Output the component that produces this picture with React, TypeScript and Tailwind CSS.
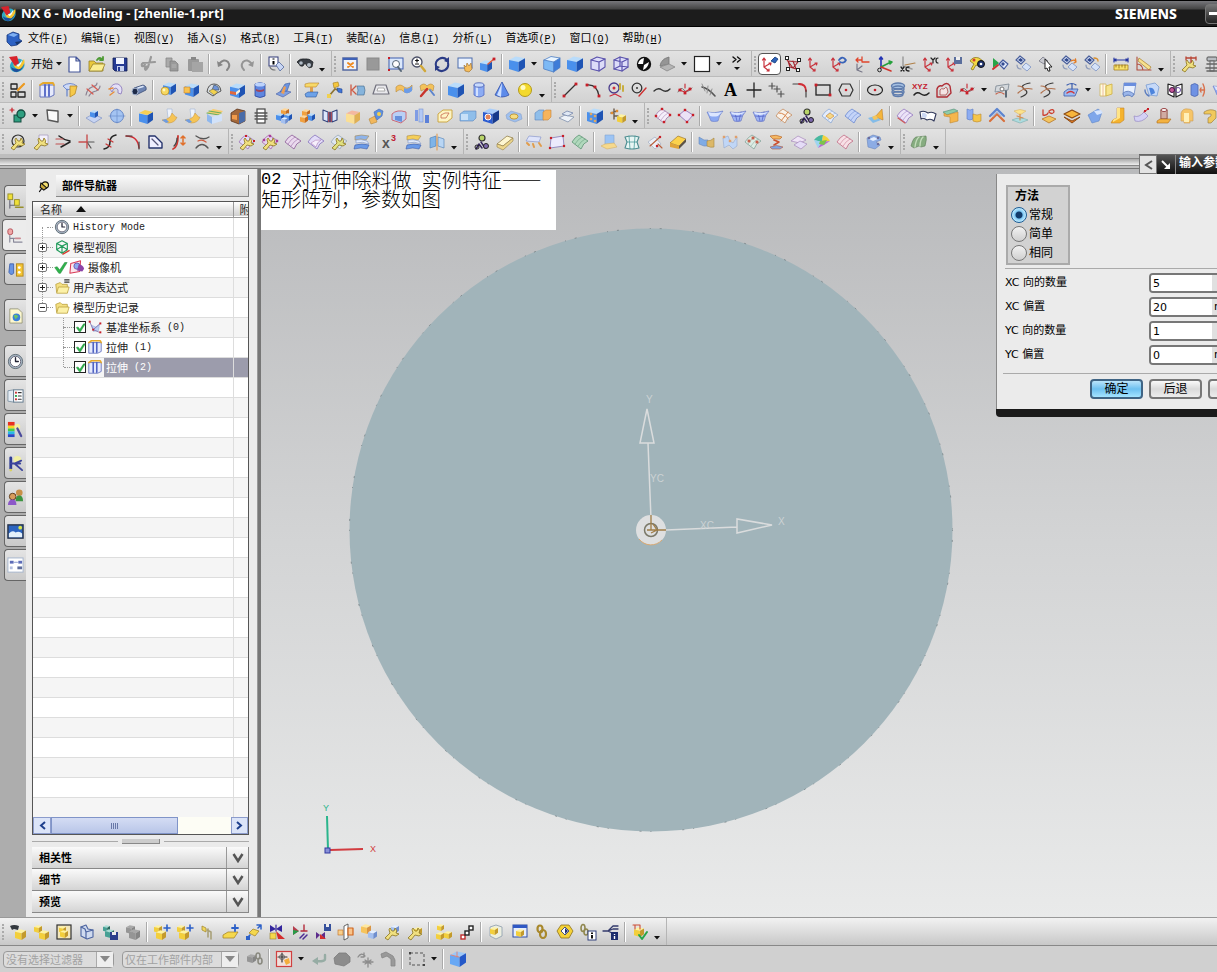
import { useState, type ReactNode } from 'react';

type ShapeProps = { d: string; c?: string; w?: number; f?: string };

// Stroke-only path
function L({ d, c = '#333', w = 1.2 }: ShapeProps) {
  return <path d={d} fill="none" stroke={c} strokeWidth={w} strokeLinecap="round" strokeLinejoin="round" />;
}

// Filled path with a thin outline
function F({ d, f = '#fff', c = 'none', w = 0.8 }: ShapeProps) {
  return <path d={d} fill={f} stroke={c} strokeWidth={w} strokeLinejoin="round" />;
}

const BLUE = ['#b9dcfb', '#4a90ec', '#1f54b4'];
const PALE = ['#e4efff', '#a4c0f0', '#6f8fd0'];
const GOLD = ['#fff3a0', '#f3cf3c', '#c39a2c'];
const ORANGE = ['#ffd79a', '#f2a03e', '#c46c20'];
const GREY = ['#a8a8a8', '#959595', '#858585'];

function Cube({ x = 1, y = 1, s = 16, t = BLUE }: { x?: number; y?: number; s?: number; t?: string[] }) {
  const p = (a: number, b: number) => `${x + a * s},${y + b * s}`;
  return (
    <>
      <polygon points={[p(0, 0.25), p(0.42, 0.03), p(1, 0.14), p(0.6, 0.38)].join(' ')} fill={t[0]} />
      <polygon points={[p(0, 0.25), p(0.6, 0.38), p(0.6, 1), p(0, 0.82)].join(' ')} fill={t[1]} />
      <polygon points={[p(0.6, 0.38), p(1, 0.14), p(1, 0.72), p(0.6, 1)].join(' ')} fill={t[2]} />
    </>
  );
}

function Sheet({ f = '#c9cdf3', c = '#6f64b8', g = true }: { f?: string; c?: string; g?: boolean }) {
  return (
    <>
      <F d="M1 9 Q4 4 8 2 L17 8 Q12 10 10 16 Z" f={f} c={c} />
      {g && <L d="M4 11 Q7 6 11 4 M7 13 Q10 8 14 6" c={c} w={0.5} />}
    </>
  );
}

function Dots({ pts, c = '#c81e28', r = 1.4 }: { pts: number[][]; c?: string; r?: number }) {
  return <>{pts.map(([x, y]) => <rect key={`${x}-${y}`} x={x - r} y={y - r} width={r * 2} height={r * 2} fill={c} />)}</>;
}

function Wrench({ c = '#f0e080' }: { c?: string }) {
  return <F d="M2 15 L7 10 Q5 6 7 5 L9 8 L11 8 L12 5 Q15 8 13 10 L16 11 L13 13 L9 12 L5 17 Z" f={c} c="#8a7420" />;
}

function Axes({ c = '#c8323c' }: { c?: string }) {
  return <L d="M3 3 V12 L8 16 M3 12 L10 8 M1.500 5 L3 3 L4.500 5 M8 8 L10 8 L9.500 10 M6 16 H8 V14" c={c} w={1.2} />;
}

function Ribbon({ a = '#f5cf5a', b = '#6a9ae8' }: { a?: string; b?: string }) {
  return (
    <>
      <F d="M2 3 Q8 1 16 3 L13 7 Q8 5 2 7 Z" f={a} c="#a88a50" w={0.6} />
      <F d="M3 7 Q8 6 14 8 L16 11 Q9 8 3 10 Z" f="#e4edfc" c="#7c94c8" w={0.6} />
      <F d="M2 12 Q9 10 16 12 L14 16 Q8 14 1 16 Z" f={b} c="#3a5aa8" w={0.6} />
    </>
  );
}

function Layers() {
  return (
    <>
      <F d="M2 5 L6 1 L11 5 L7 9 Z" f="#dfe8fb" c="#4a5f9a" w={1.2} />
      <F d="M4 5 L6.500 3 L9 5 L7 7 Z" f="#30488c" />
      <F d="M8 12 L12 8 L17 12 L13 16 Z" f="#d5e2f8" c="#7c93c4" />
      <L d="M3 10 Q3 14 7 14" c="#8b98b8" />
    </>
  );
}

const nxLogo = (
  <>
    <ellipse cx="9" cy="10.500" rx="7.500" ry="6.500" fill="#2fa8c4" transform="rotate(-30 9 10)" />
    <F d="M3 12 Q9 17 16 8 Q15 15 9 17 Q4 17 3 12 Z" f="#1f4f9c" />
    <F d="M5 9 Q10 14 16 4 Q18 9 12 14 Q7 15 5 9 Z" f="#f7c62e" />
    <F d="M7 8 Q10 12 14 5 Q14 9 10 12 Z" f="#fff" />
    <F d="M1 2 L9 1 L11 8 L7 11 Z" f="#d7232c" />
  </>
);

const icons: Record<string, ReactNode> = {
  nx: nxLogo,
  part: (
    <>
      <F d="M2 5 L8 2 L14 4 L14 9 L17 11 L12 15 L6 16 L2 12 Z" f="#2d62c4" c="#16377c" />
      <F d="M3 5 L8 3 L13 4.500 L9 7 Z" f="#7fb0f2" />
      <F d="M10 12 L17 11 L12 15 Z" f="#17376f" />
    </>
  ),
  new: <F d="M4 2 H11 L15 6 V17 H4 Z M11 2 V6 H15" f="#fff" c="#44569a" w={1.2} />,
  open: (
    <>
      <F d="M1 6 H6 L8 8 H15 V16 H1 Z" f="#e9c93c" c="#96802a" />
      <F d="M1 16 L5 9 H17 L14 16 Z" f="#fbee92" c="#96802a" />
      <L d="M9 5 Q12 1 14 5 M12 5 H15 V2" c="#4d9a34" w={1.8} />
    </>
  ),
  save: (
    <>
      <F d="M2 3 H16 V16 H4 L2 14 Z" f="#263b94" c="#101c50" />
      <rect x="5" y="3" width="8" height="6" fill="#f2f5ff" />
      <rect x="6" y="11" width="7" height="5" fill="#c8d2ef" />
      <rect x="7" y="12" width="2" height="4" fill="#263b94" />
    </>
  ),
  cut: <L d="M11 2 L8 12 M3 8 L15 7 M8 12 Q5 17 5 13 Q6 11 8 12 M4 8 Q1 8 2 11 Q5 12 5 8" c="#999" w={2.2} />,
  copy: <><F d="M3 3 H9 V12 H3 Z" f="#aaa" c="#888" /><F d="M7 6 H12 L15 9 V16 H7 Z" f="#999" c="#828282" /><L d="M9 10 H13 M9 12 H13" c="#bbb" w={0.8} /></>,
  paste: <><rect x="2" y="4" width="11" height="12" rx="1" fill="#999" /><rect x="5" y="2" width="5" height="3" fill="#888" /><rect x="6" y="7" width="11" height="10" fill="#a5a5a5" /></>,
  undo: <><L d="M4 9 Q9 3 13 7 Q16 11 12 15" c="#858585" w={2} /><F d="M2 6 L3 12 L8 10 Z" f="#858585" /></>,
  redo: <><L d="M14 9 Q9 3 5 7 Q2 11 6 15" c="#959595" w={2} /><F d="M16 6 L15 12 L10 10 Z" f="#959595" /></>,
  info: (
    <>
      <rect x="2" y="2" width="9" height="9" fill="#fff" stroke="#303a78" />
      <path d="M6.500 3.500 V4.500 M6.500 6 V9.500" stroke="#000" strokeWidth="2" />
      <F d="M9 10 L12 7 L17 12 L13 16 Z" f="#c9d6f4" c="#53689c" />
      <L d="M3 12 Q4 15 8 15" c="#777" />
    </>
  ),
  find: (
    <>
      <F d="M1 7 Q4 3 9 4 Q13 3 17 7 L16 12 Q13 14 11 11 L9 8 L7 11 Q4 12 3 9 Z" f="#3a3f46" c="#1f2226" />
      <circle cx="5" cy="8" r="1.800" fill="#b4bec9" />
      <circle cx="13" cy="10" r="2" fill="#b4bec9" />
    </>
  ),
  fit: <><rect x="2" y="3" width="14" height="12" fill="#eef2fb" stroke="#5468a0" strokeWidth="1.500" /><rect x="2" y="3" width="14" height="2" fill="#3f62b8" /><L d="M7 8 L12 12 M12 8 L7 12" c="#ef8a20" w={2} /></>,
  blank: <rect x="3" y="3" width="12" height="12" fill="#999" stroke="#8a8a8a" />,
  zoombox: <><rect x="2" y="3" width="14" height="11" fill="#dbe8fb" stroke="#3d5cae" /><circle cx="9" cy="9" r="3.500" fill="#fff" stroke="#567" /><L d="M11 12 L14 16" c="#567" w={2} /><Dots pts={[[2, 15], [2, 3]]} r={1} /></>,
  zoom: <><circle cx="7" cy="7" r="5" fill="#fff" stroke="#4a4f66" strokeWidth="1.300" /><L d="M7 4 V7 M5.500 5.500 H8.500 M5.500 9 H8.500" c="#111" /><L d="M11 11 L15 16" c="#d1a838" w={2.5} /></>,
  rotate: <><L d="M3 11 A6.500 6.500 0 0 1 14 5" c="#2a3b86" w={2} /><L d="M15 8 A6.500 6.500 0 0 1 4 14" c="#2a3b86" w={2} /><F d="M16 2 V8 L11 6 Z" f="#2a3b86" /><F d="M2 16 V10 L7 12 Z" f="#2a3b86" /></>,
  pan: <><rect x="2" y="3" width="14" height="10" fill="#eaf2ff" stroke="#4c6dab" /><F d="M9 16 L8 10 L10 12 L11 8 L13 11 L15 8 L16 14 L13 17 Z" f="#f5bd5c" c="#9a6a28" w={0.6} /></>,
  persp: <><Cube x={1} y={5} s={12} /><L d="M9 9 L15 4" c="#e05a3a" w={1.5} /><Dots pts={[[15, 4]]} /></>,
  cube: <Cube />,
  cubeEdge: <><Cube t={['#e9f5ff', '#7db9f5', '#3d7cd8']} /><L d="M1 5 L8 1.500 L17 3 L17 12.500 L10.600 17 L1 14 Z M1 5 L10.600 7 L17 3 M10.600 7 V17" c="#4a7cc4" w={0.8} /></>,
  wire: <><F d="M2 5 L8 2 L16 4 V12 L10 16 L2 14 Z" f="#dcdcf8" c="#5a52ac" w={1.1} /><L d="M2 5 L10 7 L16 4 M10 7 V16" c="#5a52ac" /></>,
  wire2: <><F d="M2 5 L8 2 L16 4 V12 L10 16 L2 14 Z" f="#dcdcf8" c="#5a52ac" w={1.1} /><L d="M2 5 L10 7 L16 4 M10 7 V16 M8 2 V11 L2 14 M8 11 L16 12" c="#5a52ac" /></>,
  half: <><circle cx="9" cy="9" r="7.200" fill="#111" /><F d="M9 3 Q4 4 3 9 L8 9 Z" f="#fff" /><F d="M14 7 Q13 13 8 15 L9 10 Z" f="#fff" /></>,
  face: <><F d="M2 11 Q3 4 11 2 L11 9 Z" f="#959595" c="#777" /><F d="M2 12 L11 9 L17 12 L9 16 Z" f="#b5b5b5" c="#888" /></>,
  white: <rect x="1.500" y="1.500" width="15" height="15" fill="#fff" stroke="#222" strokeWidth="1.200" />,
  more: <><L d="M5 2 L8 4.500 L5 7 M9.500 2 L12.500 4.500 L9.500 7" c="#111" w={1.4} /><F d="M6 12 H12 L9 15 Z" f="#111" /></>,
  wcs: <><Axes /><F d="M10 6 L14 2 L17 4 L14 8 Z" f="#2d62b8" c="#123a78" /></>,
  wcsDyn: <><L d="M3 5 L9 13 L14 7 L4 6 L6 12 L12 14 L9 6" c="#a3242c" w={1.1} /><g fill="#fff" stroke="#222"><rect x="1.500" y="1.500" width="3" height="3" /><rect x="13.500" y="3.500" width="3" height="3" /><rect x="2.500" y="12.500" width="3" height="3" /><rect x="12.500" y="13.500" width="3" height="3" /></g></>,
  axes: <Axes />,
  axRot: <><Axes /><L d="M9 5 Q12 1 15 4 M16 5 Q14 9 10 7" c="#3963b8" w={1.8} /></>,
  axOri: <><L d="M9 2 V7 H16 M3 5 H9 M5 3 L3 5 L5 7" c="#e0452c" w={1.3} /><L d="M4 9 V15 L9 17 M4 15 L9 11" c="#778" /></>,
  axRgb: <><L d="M5 2 V13 M3.500 4 L5 2 L6.500 4" c="#2434b4" w={1.6} /><L d="M5 12 L15 7 M13 6 L16 7 L14 9" c="#26a03c" w={1.6} /><L d="M5 12 L15 16" c="#d0342c" w={1.6} /><circle cx="3.500" cy="15" r="1.800" fill="none" stroke="#222" /></>,
  axXc: <><L d="M4 2 V11 L13 14" c="#999" w={1.4} /><L d="M2 12 L5 16 M5 12 L2 16 M10 12 Q7 12 7 14 Q7 16 10 16" c="#222" w={1.3} /><L d="M6 10 L16 8" c="#b08048" /></>,
  axYc: <><Axes /><L d="M9 3 L11 5 L13 3 M11 5 V8 M16 3 Q14 3 14 5.500 Q14 8 16 8" c="#222" w={1.2} /></>,
  axSave: <><Axes /><rect x="9" y="2" width="8" height="7" fill="#5a6e9c" /><rect x="11" y="2" width="4" height="3" fill="#eee" /></>,
  key: <><F d="M2 6 Q5 1 11 3 L15 6 L13 12 L8 10 L5 15 L3 14 L6 9 Z" f="#f2d845" c="#8f7a1c" /><circle cx="13" cy="9" r="3.500" fill="#20336f" stroke="#111" /><circle cx="13" cy="9" r="1.300" fill="#fff" /><circle cx="6" cy="5" r="1.500" fill="#d03c30" /></>,
  layMove: <><F d="M2 3 L8 8 L2 13 Z" f="#27a548" /><L d="M2 14 L7 10" c="#d03030" w={2} /><F d="M8 9 L12 5 L17 9 L13 14 Z" f="#e0e9fb" c="#43599c" w={1.2} /><F d="M10 9 L12 7 L14 9 L12 11 Z" f="#334a90" /></>,
  layers: <Layers />,
  layCur: <><F d="M2 6 L6 2 L11 6 L7 9 Z" f="#c9cad0" c="#787a88" /><F d="M8 4 L15 12 L12 12 L13 16 L11 16 L10 13 L8 14 Z" f="#fff" c="#222" w={1} /></>,
  layIn: <><Layers /><L d="M11 6 Q15 4 16 7 M14 8 L16 7 L15.500 4" c="#e27a24" w={1.3} /></>,
  layOut: <><Layers /><L d="M11 3 Q15 3 15 6" c="#d89030" w={1.3} /></>,
  measure: <><L d="M2 3 V7 M16 3 V7 M2 5 H16 M4 4 L2 5 L4 6 M14 4 L16 5 L14 6" c="#2434a0" /><F d="M2 10 H16 V15 H2 Z" f="#f8e26c" c="#a88020" /><L d="M4 10 V12 M7 10 V13 M10 10 V12 M13 10 V13" c="#8a6818" w={0.8} /></>,
  angle: <><F d="M4 3 L16 12 L14 15 L3 6 Z" f="#f8e08c" c="#b08a3c" /><L d="M2 2 V15 H16 M2 9 Q7 9 8 15" c="#b04c3c" w={1.1} /></>,
  wrenchPart: <><Wrench /><L d="M6 3 H16 M11 2 V7 M6 2 V5 M16 2 V5" c="#b84434" w={1.3} /></>,
  bolt: <><rect x="4" y="2" width="10" height="4" rx="1" fill="#b9bdc2" stroke="#555" /><rect x="7" y="6" width="4" height="10" fill="#d7dade" stroke="#666" /><L d="M4 9 H14 M3 13 H15 M4 16 H14" c="#666" w={1.6} /></>,

  sketch: <><L d="M2 3 H8 V8 H2 Z M2 11 H7 V16 H2 Z M9 11 H16 V16 H9 Z" c="#222" w={1.3} /><L d="M9 9 L15 3" c="#ec9a20" w={2.2} /></>,
  extrude: <><F d="M2 4 H16 V14 L12 16 H2 Z" f="#e6eafc" c="#4858b0" /><L d="M7 4 V15 M11 4 V15" c="#5064c4" w={1.8} /><L d="M2 4 L5 2 H15 L16 4" c="#e6a92c" w={1.8} /></>,
  revolve: <><F d="M2 5 Q9 0 16 5 L13 9 Q9 7 6 9 Z" f="#cddaf8" c="#5a78c8" /><F d="M9 5 L16 5 L14 13 L9 16 Z" f="#f6c94a" c="#b88a28" /><L d="M6 8 V15" c="#6280cc" /></>,
  sweep: <><L d="M2 14 Q3 8 8 6 Q13 5 13 2 M5 15 Q7 11 12 10 Q16 8 16 5" c="#8b8292" /><L d="M3 8 L9 13 M8 4 L14 9" c="#dc5a50" w={1.2} /></>,
  sweep2: <><F d="M3 8 Q5 2 11 3 Q17 6 14 13 L11 12 Q12 8 9 7 Q6 7 5 11 Z" f="#e4e0f8" c="#8774b8" /><L d="M3 14 L7 11 M2 8 L6 7" c="#e68e3c" w={1.4} /></>,
  tube: <><F d="M4 7 L13 4 Q17 5 16 9 L6 14 Z" f="#6d84b2" c="#3b4c76" /><ellipse cx="5" cy="10.500" rx="3" ry="3.400" fill="#1d2a48" stroke="#a9b7d2" /><L d="M8 7 L13 5.500" c="#dbe6f8" w={1.6} /></>,
  hole: <><Cube x={4} y={1} s={13} /><circle cx="6" cy="10" r="4" fill="#f6d860" stroke="#a87c1c" strokeWidth="0.600" /><circle cx="5" cy="9" r="1.400" fill="#fff6c0" /></>,
  boss: <><Cube x={3} y={2} s={14} /><F d="M2 6 H8 V12 H2 Z" f="#f8c250" c="#c5822c" w={0.6} /></>,
  dart: <><F d="M2 11 Q3 3 9 3 Q15 3 16 10 L12 12 L8 15 Z" f="#d8dde2" c="#333" /><F d="M7 9 L9 4 Q14 5 14 9 Z" f="#6f94d8" c="#345" w={0.6} /><F d="M4 10 L8 8 L13 11 L9 14 Z" f="#f3d24c" c="#665" w={0.6} /></>,
  pocket: <><Cube x={2} y={2} s={15} /><F d="M2 10 L8 11 V14 L2 13 Z" f="#e0683c" /><F d="M8 11 L12 8 V11 L8 14 Z" f="#f5f0e0" /></>,
  groove: <><F d="M4 3 Q9 0 14 3 V15 Q9 18 4 15 Z" f="#5e86e0" c="#2d479a" /><ellipse cx="9" cy="3.500" rx="5" ry="2" fill="#bcd2fb" /><F d="M5 8 Q9 10 13 8 V10 Q9 12 5 10 Z" f="#a0465c" /></>,
  rib: <><F d="M2 13 L9 9 L17 11 L9 16 Z" f="#7f9fe0" c="#445da4" w={0.6} /><F d="M6 11 L11 3 L16 2 L13 10 Z" f="#6c94e0" c="#3b5aa0" w={0.6} /><F d="M7 12 L10 5 L12 6 L10 13 Z" f="#ee9f54" /></>,
  flange: <><F d="M2 3 L6 2 H16 L13 6 H2 Z" f="#f8d968" c="#b8842a" w={0.6} /><rect x="7" y="6" width="3" height="7" fill="#e0a04c" /><F d="M2 13 L5 11 H15 L13 16 H3 Z" f="#6da2e8" c="#31599c" w={0.6} /></>,
  link: <><F d="M7 2 L12 1 L13 5 L8 7 Z" f="#f5c63c" c="#a57c18" w={0.6} /><L d="M9 8 L3 15 M9 8 L14 10" c="#8c7434" w={1.8} /><F d="M11 7 L16 8 L16 12 L12 11 Z" f="#3f74d8" c="#204490" w={0.6} /><rect x="1" y="13" width="4" height="4" fill="#f0d050" /></>,
  offset: <><L d="M2 4 V14 M3 9 L7 5 M3 9 L7 13" c="#ce5a44" w={1.3} /><F d="M8 5 H15 Q17 9 15 14 H8 Q10 9 8 5 Z" f="#86b4dc" c="#42688c" w={0.6} /></>,
  pad: <><F d="M4 4 H14 L17 13 H1 Z" f="#e8e8ec" c="#70707c" w={1.2} /><F d="M6 7 H12 L13 10 H5 Z" f="#fff" c="#999" /></>,
  bend: <><F d="M1 6 Q5 2 9 6 Q13 9 17 4 V9 Q12 14 8 10 Q5 7 1 11 Z" f="#f4c05c" c="#b88a3c" w={0.6} /><F d="M9 7 Q13 9 17 5 V10 Q12 14 9 11 Z" f="#6c9ce8" /></>,
  bendRed: <><F d="M2 5 Q6 1 9 5 Q13 1 16 5 L15 10 Q12 6 9 10 Q6 7 3 10 Z" f="#f3c25a" c="#b4863a" w={0.6} /><L d="M3 15 L9 8" c="#c8342c" w={2.4} /><L d="M12 9 L16 14" c="#5c84cc" w={2} /></>,
  cyl: <><F d="M4 4 V14 Q9 18 14 14 V4 Z" f="#8cacf4" c="#5068c0" /><rect x="6" y="5" width="2" height="10" fill="#d3e1fe" /><ellipse cx="9" cy="4" rx="5" ry="2.200" fill="#c8dafd" stroke="#4058b0" strokeWidth="0.800" /></>,
  cone: <><F d="M9 1 L16 14 Q9 18 2 14 Z" f="#5d8bea" c="#3450a8" /><F d="M9 2 L8 16 L4 14 Z" f="#cfe0ff" /></>,
  sphere: <><circle cx="9" cy="9" r="6.500" fill="#f3d92c" stroke="#b39a1c" /><circle cx="7" cy="6.500" r="2.500" fill="#fffbc0" /></>,
  line: <><L d="M3 15 L15 3" w={1.3} /><Dots pts={[[3, 15], [15, 3]]} /></>,
  arc: <><L d="M3 4 Q13 3 15 15" w={1.3} /><Dots pts={[[3, 4], [11, 6], [15, 15]]} /></>,
  circles: <><circle cx="7" cy="7" r="5" fill="none" stroke="#4a3c8c" strokeWidth="1.300" /><circle cx="7" cy="7" r="1.500" fill="#ce2c3c" /><L d="M13 3 V8 M16 5 V10" c="#c8ae40" w={2} /><L d="M3 15 L8 13 L14 16" c="#ce2c3c" /></>,
  circleTan: <><circle cx="7" cy="7" r="4.800" fill="none" stroke="#333" strokeWidth="1.300" /><circle cx="7" cy="7" r="1" fill="#333" /><L d="M9 15 L16 7" c="#ce3030" w={1.4} /></>,
  spline: <L d="M1 10 Q5 6 9 9 Q13 12 17 8" w={1.3} />,
  points: <><L d="M2 11 Q5 5 8 9 Q11 13 16 7" c="#777" w={1} /><L d="M9 3 V7 M3 9 L9 11 L14 8" c="#c8323c" /><Dots pts={[[4, 9], [9, 12], [14, 8]]} /></>,
  fitSpline: <><L d="M3 6 Q9 7 16 15" c="#555" w={1.6} /><L d="M3 3 L6 10 M9 5 L8 12 M13 8 L11 14" c="#888" w={0.9} /></>,
  plus: <L d="M9 2 V16 M2 9 H16" c="#222" w={1.3} />,
  pointset: <L d="M4 2 V8 M1 5 H7 M9 5 V11 M6 8 H12 M13 10 V16 M10 13 H16" c="#555" />,
  corner: <><L d="M2 3 H10" c="#444" /><L d="M8 3 Q15 3 15 10" c="#d22c34" w={1.8} /><L d="M15 9 V16" c="#444" /></>,
  rect: <><rect x="2" y="4" width="14" height="10" fill="none" stroke="#222" strokeWidth="1.300" /><Dots pts={[[2, 4], [16, 14]]} /></>,
  polygon: <><L d="M5 3 H13 L16 9 L13 15 H5 L2 9 Z" w={1.2} /><circle cx="9" cy="9" r="1.300" fill="#c8202c" /></>,
  ellipse: <><ellipse cx="9" cy="9" rx="7.500" ry="5" fill="none" stroke="#222" strokeWidth="1.200" /><circle cx="9" cy="9" r="1.300" fill="#c8202c" /></>,
  helix: <g fill="none" stroke="#5f7dae" strokeWidth="1.500"><ellipse cx="9" cy="5" rx="6.500" ry="3" fill="#a5c0e2" /><ellipse cx="9" cy="8" rx="6" ry="3" /><ellipse cx="9" cy="11" rx="6" ry="3" /><ellipse cx="9" cy="13" rx="5" ry="2.500" /></g>,
  xyz: <><text x="0" y="8" fontSize="8" fontWeight="700" fill="#c3202e" fontFamily="Liberation Sans">XYZ</text><L d="M2 14 Q5 10 9 13 Q13 16 17 12" c="#222" w={1.5} /></>,
  outline: <><F d="M2 16 V8 Q3 4 7 5 Q12 0 15 5 L16 12 L12 16 Z" f="none" c="#b02c34" w={1.4} /><F d="M5 14 V9 Q6 7 9 8 Q11 5 12 7 L13 11 L11 14 Z" f="#f4e4e4" c="#a44848" /></>,
  project: <><F d="M3 5 L16 3 L15 9 L2 11 Z" f="#d4d8dc" c="#7a8590" /><circle cx="9" cy="8" r="2" fill="#fff" stroke="#777" /><L d="M3 13 Q7 10 11 13" c="#c66048" /><L d="M13 10 V16" c="#345" w={1.5} /></>,
  isect: <><L d="M14 2 Q3 4 8 8 Q15 12 5 16" c="#3a3a3a" w={1.2} /><L d="M2 12 Q8 6 16 8 M2 5 Q7 5 9 9" c="#b0704c" w={1.2} /></>,
  wrap: <><F d="M2 11 L6 8 H16 L13 15 H2 Z" f="#9dbcf2" c="#3a5cac" /><L d="M5 12 Q9 9 12 12" c="#d23434" w={1.4} /><L d="M10 3 V8 M5 4 Q10 1 14 4" c="#3a5cac" w={1.2} /></>,
  doc: <><F d="M3 3 H9 V15 H3 Z" f="#fffbe0" c="#cfb660" /><F d="M9 5 L15 3 V13 L9 15 Z" f="#f6e48c" c="#cfae40" /><L d="M6 3 V15" c="#e8ac8c" w={0.8} /></>,
  sheetWin: <><F d="M4 2 H16 L14 14 H3 Z" f="#e8f0fe" c="#6a86c4" /><rect x="4" y="2" width="12" height="3" fill="#6a8ede" /><F d="M3 12 Q8 8 14 13 L12 16 Q8 12 4 16 Z" f="#9bb6ea" c="#5a78b8" /></>,
  sheetRot: <><F d="M3 4 L12 2 L16 6 L14 15 L6 14 Z" f="#c6d9f8" c="#7a9cd0" /><F d="M6 7 Q11 6 12 12 L8 14 Z" f="#4d84dc" /><L d="M2 9 Q2 13 6 15" c="#5a7cc0" w={1.4} /></>,
  mirror: <><F d="M2 3 L8 5 V16 L2 13 Z" f="#fff" c="#222" w={1.2} /><F d="M10 5 L16 3 V13 L10 16 Z" f="#fff" c="#222" w={1.2} /><circle cx="6" cy="9" r="2.500" fill="#c85898" stroke="#414" /><circle cx="12" cy="9" r="2.500" fill="none" stroke="#6a4c9c" /></>,
  cylArrow: <><F d="M2 4 Q6 1 9 4 V14 Q6 17 2 14 Z" f="#6f92e4" c="#4f68b0" /><L d="M14 3 Q17 9 14 15 M11 9 H15 M12 7 L11 9 L12 11" c="#d8704c" w={1.4} /></>,

  bool: <><L d="M1 3 H5 M3 1 V5" c="#c81e28" /><rect x="5" y="8" width="7" height="7" fill="#2f9f80" stroke="#144c40" /><circle cx="12" cy="7" r="4" fill="#2f9f80" stroke="#144c40" strokeWidth="1.300" /></>,
  plane: <F d="M3 3 L14 4 V15 L4 13 Z" f="#fafafa" c="#555" w={1.4} />,
  datum: <><F d="M1 11 L8 7 L17 11 L9 16 Z" f="#c7d4f2" c="#8a9cc8" /><Cube x={5} y={3} s={8} /></>,
  datumSph: <><circle cx="9" cy="9" r="6.500" fill="#a4c4f2" stroke="#6688c8" /><L d="M1 9 H17 M9 2 V16" c="#6f90cc" w={0.7} /></>,
  boxTop: <><Cube x={2} y={3} s={14} /><F d="M2 6 L8 3 L16 5 L10 8 Z" f="#f7cf54" /></>,
  curveUp: <><F d="M7 2 H12 V9 Q12 12 8 11 Z" f="#eef3fb" c="#9fb4d4" w={0.6} /><F d="M12 6 Q16 11 17 10 Q15 16 8 16 L2 13 Q10 13 12 6 Z" f="#f6c455" c="#c99a48" w={0.6} /><F d="M2 13 L6 12 L9 15 L6 16 Z" f="#6f9ce0" /></>,
  chamfer: <><F d="M1 6 L7 2 L17 4 L13 8 Z" f="#f8cc70" /><L d="M1 6 L13 8 M3 4 L15 6" c="#6cb05c" w={1.2} /><F d="M1 7 L6 10 V17 L1 14 Z" f="#8fb8ee" /><F d="M6 10 L16 7 V14 L6 17 Z" f="#d2e2f9" /></>,
  shell: <><F d="M2 6 L8 2 L16 4 V14 L10 17 L2 14 Z" f="#a4683a" c="#5a341c" /><F d="M10 6 L16 4 V14 L10 17 Z" f="#4a6ca8" /><F d="M3 8 L8 8 V13 L3 12 Z" f="#f29c4c" /></>,
  thread: <><rect x="5" y="2" width="8" height="14" fill="#fff" stroke="#444" strokeWidth="1.200" /><L d="M3 6 H15 M3 9 H15 M3 12 H15" c="#555" w={1.3} /></>,
  blocks: <><Cube x={6} y={1} s={8} t={ORANGE} /><Cube x={1} y={6} s={8} /><Cube x={9} y={6} s={8} /><Cube x={6} y={10} s={7} t={PALE} /></>,
  blocks2: <><Cube x={4} y={2} s={8} t={ORANGE} /><Cube x={9} y={6} s={8} /><Cube x={2} y={8} s={8} t={ORANGE} /></>,
  book: <><F d="M2 3 L7 5 V15 L2 13 Z M16 3 L11 5 V15 L16 13 Z" f="#dce6fc" c="#33447c" w={1.1} /><F d="M7 5 H11 V15 H7 Z" f="#a44c5c" /><L d="M9 5 V15" c="#33447c" /></>,
  goldBox: <><Cube x={2} y={3} s={14} t={['#f4b8a0', '#fbdf94', '#e0b054']} /></>,
  steps: <><F d="M2 12 L8 9 L10 15 L4 17 Z" f="#f1b75c" c="#b4863c" w={0.6} /><F d="M8 9 L7 5 L12 2 L16 4 L15 9 L10 13 Z" f="#5d90e0" c="#456ab0" w={0.6} /><circle cx="12" cy="7" r="2" fill="#f2d04c" /></>,
  redBox: <><F d="M2 7 Q7 2 16 5 V12 L11 16 L2 13 Z" f="#b9d0f6" c="#cc6c78" w={1} /><F d="M5 9 H12 V15 L5 13 Z" f="#6790dc" /></>,
  cols: <><rect x="2" y="3" width="3" height="11" fill="#7f9ce4" /><rect x="6" y="2" width="4" height="13" fill="#b3c9f6" stroke="#7c94d0" strokeWidth="0.600" /><rect x="12" y="8" width="4" height="8" fill="#5c80d8" /></>,
  goldWire: <><F d="M2 7 L7 3 H16 V11 L11 15 H2 Z" f="#fdf4c4" c="#c8a038" w={0.9} /><F d="M5 8 L9 6 H13 L10 11 H5 Z" f="none" c="#c86a50" /></>,
  flat: <><F d="M1 7 L5 4 H17 V11 L14 14 H1 Z" f="#8fbeea" c="#5a84bc" w={0.6} /><F d="M2 7 H9 V13 H2 Z" f="#c8e0f8" /></>,
  cubeHole: <><Cube t={['#a9cdfa', '#2c5cd0', '#173a8c']} /><circle cx="6" cy="10" r="3" fill="#e4845c" stroke="#fff" /></>,
  torus: <><F d="M1 8 L6 4 L16 7 L17 12 L10 15 L2 12 Z" f="#9fc0ee" c="#84a0cc" w={0.6} /><ellipse cx="9" cy="9.500" rx="4" ry="2.600" fill="#f5dc80" stroke="#c09a3c" /></>,
  duo: <><F d="M1 6 L5 3 H10 V13 H1 Z" f="#8fbeea" c="#5a84bc" w={0.6} /><F d="M9 5 L12 3 H17 V10 L14 13 H9 Z" f="#f6b45c" c="#c4843c" w={0.6} /></>,
  slabs: <><F d="M2 11 L8 8 L17 10 L11 15 Z" f="#eef2f8" c="#8090ac" /><F d="M5 7 L10 4 L16 6 L11 9 Z" f="#e0e8f4" c="#7688ac" /></>,
  cubeDots: <><Cube /><Dots pts={[[5, 7], [9, 9], [5, 12], [9, 14]]} c="#e0a860" r={1.2} /></>,
  treeGold: <><L d="M5 2 V12 M2 6 L8 4 M5 9 H10" c="#6c5c4c" w={1.4} /><Cube x={8} y={7} s={9} t={GOLD} /><Dots pts={[[3, 6], [8, 4]]} c="#e08c30" r={1.2} /></>,
  surfDot: <><Sheet f="#f4eefa" c="#a078a8" /><Dots pts={[[8, 2], [2, 9], [16, 8], [10, 15]]} r={1.2} /></>,
  surfDot2: <><F d="M2 8 L8 3 L16 8 L10 15 Z" f="#ebe2f6" c="#8a68b8" /><Dots pts={[[2, 8], [8, 3], [16, 8], [10, 15]]} r={1.2} /></>,
  sail: <><F d="M1 5 Q8 7 17 4 Q13 8 12 14 Q8 15 5 14 Q3 9 1 5 Z" f="#8ba8f2" c="#6478c8" w={0.6} /><F d="M2 5 Q9 7 16 5 L12 9 Q8 10 4 9 Z" f="#dce6ff" /></>,
  sailGrid: <><F d="M1 5 Q8 7 17 4 Q13 8 12 14 Q8 15 5 14 Q3 9 1 5 Z" f="#9fb4f4" c="#5c6cc0" w={0.6} /><L d="M3 9 Q8 10 13 9 M6 6 L8 14 M12 5 L10 14" c="#4c5cc4" w={0.7} /><F d="M2 5 Q9 7 16 5 L13 7 Q8 9 3 7 Z" f="#dce6ff" /></>,
  surfOr: <><Sheet f="#f8f2ea" c="#c48c60" g={false} /><L d="M4 6 Q10 6 13 12 M6 14 L13 5" c="#d8844c" w={1} /></>,
  people: <><circle cx="9" cy="5" r="3" fill="#b8d468" stroke="#333" strokeWidth="1.200" /><L d="M3 16 L6 11 L9 15 M8 9 L12 15" c="#33255c" w={1.5} /><circle cx="4" cy="14" r="2" fill="none" stroke="#222" /><circle cx="13" cy="13" r="2.500" fill="#7c68ac" stroke="#222" /></>,
  surfYel: <><Sheet f="#e4ecfb" c="#8ca8d4" /><F d="M5 9 L9 6 L13 9 L9 12 Z" f="#f5d888" c="#d89a48" /></>,
  surfBlue: <Sheet f="#c4d4f8" c="#6a88d0" />,
  plane3: <><F d="M8 10 L15 2 L16 13 Z" f="#f5b63c" c="#c08028" w={0.6} /><F d="M1 11 L8 9 L14 13 L6 16 Z" f="#84bce8" /><F d="M5 10 L9 8 L11 12 L7 13 Z" f="#f5c65c" /></>,
  surfPur: <><Sheet f="#ece4f8" c="#9478c0" /><L d="M2 11 L9 16" c="#cf5858" w={1.2} /></>,
  bookOpen: <><F d="M1 5 Q5 3 9 6 Q13 4 17 7 L15 14 Q12 11 8 13 Q4 10 2 12 Z" f="#fff" c="#333a5c" w={1.1} /><F d="M3 6 Q6 5 8 8 L7 11 L3 10 Z" f="#ccd8f4" /></>,
  goldTeal: <><F d="M1 5 L12 2 L16 4 L5 8 Z" f="#8ecba8" c="#4c8a74" w={0.6} /><F d="M2 6 L5 8 L16 5 V14 L8 16 V10 L2 9 Z" f="#f5b64c" c="#c08830" w={0.6} /></>,
  flagPair: <><F d="M2 2 Q5 4 8 2 V12 Q5 14 2 12 Z" f="#8cacf2" c="#5c7cc4" w={0.6} /><F d="M8 7 Q12 9 16 7 V14 Q12 16 8 14 Z" f="#f5c64c" c="#ba862c" w={0.6} /></>,
  roof: <><L d="M2 9 L9 2 L16 9" c="#5c84d0" w={2.2} /><L d="M2 14 L9 7 L16 14" c="#d8703c" w={2.2} /><L d="M5 9 L9 5 L13 9" c="#a4b8dc" w={1.2} /></>,
  stack: <><F d="M3 4 Q9 1 15 4 L9 8 Z" f="#fbe28c" c="#d8b46c" w={0.6} /><F d="M1 13 Q9 9 17 13 L9 16 Z" f="#aedce0" c="#78acac" w={0.6} /><L d="M9 7 V13 M6 9 L12 11" c="#d89050" w={1.2} /></>,
  swirl: <><F d="M2 12 L9 9 L16 12 L9 16 Z" f="#f2c460" c="#b8782c" /><L d="M3 3 V8 Q7 9 8 6 M9 4 Q14 1 14 5 Q12 8 9 5" c="#cc4030" w={1.3} /></>,
  mat: <><F d="M1 7 L9 3 L17 7 L9 11 Z" f="#f7b43c" c="#8c4a14" w={1.2} /><F d="M1 10 L9 14 L17 10 L9 16 Z" f="#ee8226" c="#8c4a14" w={1} /></>,
  blueFold: <><F d="M2 8 L12 2 L16 5 L13 14 L6 16 Z" f="#7fa6ea" c="#5d84c8" w={0.6} /><F d="M8 4 L15 3 L17 6 L11 8 Z" f="#d8e6fd" /></>,
  boot: <><F d="M8 1 H15 V13 L11 16 H2 Q3 12 8 11 Z" f="#f5b32e" c="#c48830" w={0.6} /><F d="M8 1 H11 V11 L4 15 Q3 12 8 11 Z" f="#ffe487" /></>,
  pipe: <><F d="M2 9 Q7 11 12 5 L16 9 Q10 16 3 14 Z" f="#d4d1f4" c="#8c7cc0" w={0.6} /><L d="M12 5 L16 2" c="#c84c4c" /><Dots pts={[[13, 4], [16, 2]]} r={1} /></>,
  tower: <><F d="M6 3 H12 V12 H6 Z" f="#f5e4dc" c="#8c4438" w={1.1} /><L d="M8 4 V12 M10 4 V12" c="#8c4438" w={0.7} /><ellipse cx="9" cy="3" rx="3" ry="1.500" fill="#fff" stroke="#944" /><F d="M2 14 L5 12 H16 L13 16 H2 Z" f="#f3b240" c="#ac6c1c" w={0.6} /></>,
  arch: <><F d="M3 6 Q5 1 10 2 Q15 2 15 6 V14 H12 V16 H6 V14 H3 Z" f="#f6c568" c="#c99c58" w={0.6} /><rect x="6" y="6" width="5" height="9" fill="#fff0b8" /></>,
  hook: <><F d="M3 5 Q9 1 15 4 V11 L10 16 H7 V11 L10 9 V7 H3 Z" f="#f0c95c" c="#93753c" w={0.6} /></>,

  curveWrench: <><circle cx="9" cy="8" r="6" fill="none" stroke="#333" strokeWidth="1.200" /><Wrench /></>,
  docWrench: <><F d="M7 2 H16 V12 H7 Z" f="#f3f0fb" c="#a8a0c0" /><Wrench /></>,
  trim: <><L d="M4 3 Q9 7 15 8 M6 14 L15 9" c="#222" w={1.5} /><L d="M1 6 H8 M1 11 H9" c="#c05050" w={1.2} /></>,
  cross: <><L d="M9 9 H16 M9 9 L13 15" c="#555" /><L d="M9 2 V15 M1 9 H9" c="#c85050" w={1.4} /></>,
  scurve: <><L d="M15 2 Q9 3 9 9 Q9 15 3 16" c="#222" w={1.5} /><L d="M7 6 L12 9 M5 11 L10 14" c="#c83434" w={1.2} /></>,
  fillet: <><L d="M2 3 Q14 3 15 15" c="#d22c34" w={1.4} /><L d="M2 3 H8 M15 9 V16" c="#444" /></>,
  chamf: <><F d="M2 3 H8 L15 10 V15 H2 Z" f="#eef" c="#26346c" w={1.4} /><L d="M5 6 L11 12" c="#557" /></>,
  stretch: <><L d="M3 16 Q8 14 8 3" c="#cb3630" w={1.8} /><L d="M4 13 Q7 10 7 5" c="#444" /><L d="M13 12 V3 M11 5 L13 3 L15 5 M11 10 L13 12 L15 10" c="#e0702c" w={1.5} /></>,
  joinC: <><L d="M3 3 Q10 8 16 4 M3 15 Q9 8 15 15" c="#555" w={1.3} /><L d="M5 8 Q9 6 13 9" c="#cf5c40" w={1.3} /></>,
  surfWrench: <><Sheet f="#e4dcf6" c="#9a72b8" g={false} /><Wrench /><Dots pts={[[8, 3], [16, 8]]} r={1} /></>,
  surfWrench2: <><Sheet f="#e6d4ee" c="#a868b0" g={false} /><Wrench /><Dots pts={[[3, 7], [9, 3], [16, 8]]} c="#a83c98" r={1.200} /></>,
  surfRose: <Sheet f="#ead9ee" c="#8c5c98" />,
  surfArc: <><Sheet f="#e2dcf8" c="#8672bc" g={false} /><F d="M4 10 Q8 6 14 7 Q10 9 9 14 Z" f="#f6f0fc" c="#b080b8" w={0.6} /></>,
  surfGreen: <><Sheet f="#dfe6f2" c="#98a8b8" g={false} /><Wrench c="#e0e080" /></>,
  ribbon: <Ribbon />,
  ribbon2: <Ribbon a="#8fb4ea" />,
  x3: <><text x="0" y="15" fontSize="14" fontWeight="700" fill="#555" fontFamily="Liberation Sans">x</text><text x="9" y="8" fontSize="9" fontWeight="700" fill="#c02030" fontFamily="Liberation Sans">3</text></>,
  flip: <><F d="M2 5 L8 3 V13 L2 15 Z" f="#7fb4e8" c="#4c7cb4" w={0.6} /><F d="M10 4 L16 6 V15 L10 13 Z" f="#b9d6f4" c="#4c7cb4" w={0.6} /><L d="M9 1 V17" c="#e0a05c" w={1.2} /></>,
  goldPlank: <><F d="M1 11 L11 3 L17 5 L7 13 Z" f="#fdf6d0" c="#93804c" /><F d="M7 13 L17 5 V8 L7 17 L1 14 V11 Z" f="#ecd68c" c="#93804c" w={0.6} /></>,
  table: <><F d="M4 3 L16 4 L14 9 L1 8 Z" f="#dfe4fa" c="#7c8cc8" w={0.6} /><L d="M2 10 L4 12 M8 11 L9 14 M14 10 L16 13" c="#e09c4c" w={2} /></>,
  quad: <><F d="M3 5 L15 3 L16 13 L2 15 Z" f="#eceafc" c="#8478b8" /><Dots pts={[[3, 5], [15, 3], [16, 13], [2, 15]]} r={1.1} /></>,
  mesh: <Sheet f="#b0d8bc" c="#5c9474" />,
  shelf: <><F d="M5 2 L14 2 V11 L5 12 Z" f="#9cc4f4" c="#84a4d0" w={0.6} /><F d="M1 13 L5 11 L14 10 L17 14 L7 16 Z" f="#f6d98c" c="#d4b068" w={0.6} /></>,
  meshBox: <><F d="M2 4 Q9 2 16 4 L14 9 L16 15 Q9 17 2 15 L4 9 Z" f="#e8f6f4" c="#4c8c90" w={1.1} /><L d="M4 9 H14 M6 3 L7 16 M12 3 L11 16" c="#4c9c9c" w={0.8} /></>,
  pinned: <><F d="M2 9 L9 4 L15 11 L9 16 Z" f="#ecf0f8" c="#98a4bc" w={0.6} /><L d="M4 13 L14 4 M12 11 L16 15" c="#b8603c" w={1.1} /><Dots pts={[[14, 4], [11, 13]]} r={1.1} /></>,
  goldBar: <><F d="M1 10 L9 3 L17 6 L10 13 Z" f="#fbd24c" c="#94681c" w={0.6} /><F d="M1 10 L10 13 V16 L1 14 Z" f="#e0a438" /><F d="M10 13 L17 6 V9 L10 16 Z" f="#5c5448" /></>,
  wave: <><F d="M1 4 L6 7 H10 V13 H6 L1 11 Z" f="#7fabe4" c="#6888bc" w={0.6} /><F d="M9 8 Q13 8 16 5 V14 Q13 15 9 13 Z" f="#dcb868" c="#a48844" w={0.6} /></>,
  drape: <><F d="M2 5 L7 3 L9 8 L12 10 L16 4 V13 L12 16 L8 12 L3 15 Z" f="#c0d6f6" c="#94a8cc" w={0.6} /><Dots pts={[[3, 4], [9, 8], [15, 4]]} c="#e0a06c" r={1.2} /></>,
  patchR: <><Sheet f="#dcece4" c="#84a49c" /><Dots pts={[[5, 8], [9, 5], [13, 9]]} c="#c8604c" r={1.4} /></>,
  spool: <><F d="M3 3 Q9 1 15 4 L13 6 H6 Z" f="#f4b864" c="#b45c1c" w={0.6} /><L d="M7 7 L12 9 L7 12" c="#cc5030" w={1.6} /><F d="M3 14 Q9 11 16 14 L13 16 H5 Z" f="#7ca4e4" c="#b4583c" w={0.6} /></>,
  twoSurf: <><F d="M1 8 L8 3 L16 7 L10 10 Z" f="#efe4f6" c="#9a7ab4" w={0.6} /><F d="M4 12 L10 8 L17 11 L11 16 Z" f="#e4dcf6" c="#9a7ab4" w={0.6} /></>,
  rainbow: <><F d="M1 7 Q5 2 10 2 L9 9 Z" f="#48b8a0" /><F d="M10 2 Q15 4 17 8 L9 9 Z" f="#f2d23c" /><F d="M1 7 L9 9 L5 15 Z" f="#9cd4f0" /><F d="M9 9 L17 8 L11 12 L5 15 Z" f="#b868d8" /><F d="M7 8 L14 7 L11 12 L6 11 Z" f="#7cc44c" /></>,
  surfRed: <Sheet f="#f7e0e6" c="#c06c84" />,
  blueHex: <><F d="M2 5 L8 2 L15 4 L16 7 L11 9 L15 12 L10 16 L3 14 Z" f="#8cace4" c="#6884bc" w={0.6} /><F d="M4 6 L9 4 L13 6 L8 8 Z" f="#e3edfd" /><Dots pts={[[4, 5], [13, 5], [13, 11]]} c="#6c6c9c" r={1.1} /></>,
  greenWave: <><F d="M1 13 Q3 5 6 4 L16 3 Q17 6 15 13 L11 14 L9 13 L4 15 Z" f="#86ac80" c="#5c7c58" w={0.6} /><L d="M5 14 Q6 6 9 4 M10 13 Q10 7 13 4" c="#c4dcbc" w={1.4} /></>,

  gold2: <><Cube x={2} y={2} s={8} t={GOLD} /><Cube x={7} y={7} s={10} t={GOLD} /></>,
  findGold: <><F d="M1 3 Q5 1 10 3 L9 7 L5 6 L3 7 Z" f="#33383e" /><Cube x={6} y={6} s={11} t={GOLD} /></>,
  frameGold: <><rect x="2" y="2" width="14" height="14" fill="#f3e7bb" stroke="#333" strokeWidth="1.200" /><Cube x={4} y={3} s={7} t={GOLD} /><Cube x={5} y={7} s={8} t={GOLD} /></>,
  ghost: <><F d="M3 4 L8 2 L10 6 L15 7 V14 L9 16 L3 13 Z" f="#cfdaef" c="#4c64a0" w={1.1} /><L d="M3 4 L7 6 L8 9 V15 M8 9 L15 7" c="#4c64a0" /></>,
  saveTeal: <><Cube x={2} y={2} s={7} t={['#a8dcd4', '#46a094', '#28685c']} /><Cube x={4} y={6} s={9} t={['#a8dcd4', '#46a094', '#28685c']} /><rect x="9" y="9" width="8" height="8" fill="#2b3f8c" /><rect x="11" y="9" width="4" height="3" fill="#eee" /></>,
  greyPart: <><Cube x={2} y={2} s={9} t={GREY} /><Cube x={5} y={6} s={11} t={GREY} /></>,
  addGold: <><Cube x={1} y={2} s={8} t={GOLD} /><Cube x={3} y={7} s={10} t={GOLD} /><L d="M14 2 V8 M11 5 H17" c="#2c60c8" w={1.6} /></>,
  goldStem: <><F d="M3 3 L7 5 V9 L3 7 Z" f="#f1d85c" c="#a58c34" /><L d="M8 7 L12 9 V16 M9 6 V14" c="#a8a078" w={1.6} /></>,
  goldFlat: <><F d="M1 12 L6 9 H16 L12 15 H1 Z" f="#f5d84c" c="#a8882c" /><L d="M13 2 V8 M10 5 H16" c="#2c60c8" w={1.8} /></>,
  goldMove: <><F d="M4 10 L8 6 L14 8 L10 13 Z" f="#f5d84c" c="#a8882c" /><L d="M13 5 L16 2 M12 2 H16 V6 M5 12 L3 14" c="#2c60c8" w={1.5} /><rect x="1" y="13" width="4" height="4" fill="#2c60c8" /></>,
  mates: <><F d="M2 2 L8 6 L14 2 V9 L8 6 L2 9 Z" f="#33259c" /><L d="M8 2 V8" c="#33259c" /><rect x="2" y="10" width="6" height="6" fill="#f5d84c" stroke="#98802c" strokeWidth="0.600" /><F d="M8 8 L17 16 H10 Z" f="#d42c2c" /></>,
  constr: <><F d="M2 3 L8 8 L2 12 Z" f="#b43c4c" /><F d="M2 7 L8 8 L2 12 Z" f="#279c48" /><L d="M13 2 V8 M10 8 H16" c="#b42c3c" w={1.4} /><L d="M9 15 L13 11 M12 16 L16 12" c="#4c2c94" w={1.5} /></>,
  cnsSave: <><rect x="10" y="1" width="7" height="7" fill="#35509c" /><rect x="12" y="1" width="3" height="3" fill="#eee" /><F d="M2 9 L6 12 L2 16 Z M11 9 L7 12 L11 16 Z" f="#5c2c8c" /><F d="M6 11 L12 16 H6 Z" f="#d42c2c" /></>,
  mirrorOr: <><F d="M7 3 L11 1 V15 L7 17 Z" f="#fff" c="#444" /><rect x="1" y="7" width="5" height="5" fill="#f8cf8c" stroke="#c06c1c" strokeWidth="0.600" /><F d="M11 5 H16 V12 H11 Z" f="#f8c48c" c="#d0641c" w={1.2} /></>,
  goldPale: <><Cube x={1} y={1} s={10} t={['#ffe8a0', '#f6c45c', '#d89444']} /><Cube x={8} y={7} s={9} t={PALE} /></>,
  wrenchGold: <><Cube x={8} y={2} s={8} t={PALE} /><Wrench /></>,
  wrenchG2: <><Cube x={8} y={4} s={8} t={GOLD} /><Wrench /></>,
  three: <><Cube x={2} y={1} s={7} t={GOLD} /><Cube x={1} y={9} s={8} t={GOLD} /><Cube x={9} y={8} s={8} t={GOLD} /></>,
  chain: <><rect x="3" y="12" width="4" height="4" fill="#fff" stroke="#c02c2c" strokeWidth="1.400" /><rect x="7" y="8" width="4" height="4" fill="#fff" stroke="#222" strokeWidth="1.400" /><rect x="11" y="3" width="4" height="4" fill="#fff" stroke="#222" strokeWidth="1.400" /></>,
  ghostGold: <><F d="M3 4 L9 2 L15 4 V13 L9 16 L3 13 Z" f="#eceee0" c="#8c9cac" /><Cube x={3} y={4} s={8} t={GOLD} /></>,
  winGold: <><rect x="3" y="2" width="14" height="12" fill="#e7eefb" stroke="#2f4ea4" /><rect x="3" y="2" width="14" height="3" fill="#2f58c4" /><Cube x={6} y={6} s={8} t={GOLD} /></>,
  rings: <g fill="none" stroke="#a8882c" strokeWidth="2.200"><ellipse cx="7" cy="6" rx="2.500" ry="3.500" /><ellipse cx="10" cy="11" rx="3" ry="4" /></g>,
  nut: <><F d="M5 2 L13 2 L17 8 L13 15 L5 15 L1 8 Z" f="#f5d238" c="#8c701c" /><F d="M5 8 L9 4 L13 8 L9 12 Z" f="#fff" c="#203070" /><F d="M9 5 L12 8 L9 11 Z" f="#203070" /></>,
  infoLink: <><ellipse cx="4" cy="5" rx="2" ry="3.500" fill="none" stroke="#908850" strokeWidth="1.600" /><ellipse cx="7" cy="9" rx="2" ry="3" fill="none" stroke="#908850" strokeWidth="1.600" /><rect x="9" y="8" width="8" height="9" fill="#fff" stroke="#30407c" /><path d="M13 9.500 V11 M13 12 V15.500" stroke="#111" strokeWidth="2" /></>,
  infoTree: <><L d="M1 8 H6 L11 3 H16 M6 8 L11 6 H16 M6 8 L10 10" c="#333a6c" w={1.3} /><rect x="9" y="9" width="7" height="8" fill="#1c2c6c" /><path d="M12.500 11 V12 M12.500 13 V16" stroke="#fff" strokeWidth="1.400" /></>,
  boxCheck: <><Cube x={3} y={4} s={10} t={GOLD} /><L d="M2 2 H9 V6 M4 2 V6" c="#cc4c34" w={1.1} /><L d="M8 12 L11 16 L16 9" c="#27a548" w={2} /></>,
  greyLink: <><Cube x={1} y={4} s={9} t={GREY} /><g fill="none" stroke="#8a8a80" strokeWidth="1.600"><ellipse cx="12" cy="6" rx="2" ry="3" /><ellipse cx="14" cy="11" rx="2" ry="3" /></g></>,
  snap: <><rect x="1.500" y="1.500" width="15" height="15" fill="#f0e0dc" stroke="#d04040" strokeWidth="1.200" /><L d="M7 3 V12 M3 7 H12" c="#333" /><circle cx="7" cy="7" r="2.500" fill="none" stroke="#666" /><F d="M9 10 L14 8 L15 13 L11 15 Z" f="#f3ae3c" /></>,
  back: <><L d="M15 5 V9 Q15 12 5 11" c="#96aca4" w={2.4} /><F d="M2 11 L8 7 V15 Z" f="#96aca4" /></>,
  greyCube: <F d="M1 8 L6 3 L13 3 L17 7 V12 L11 16 L2 14 Z" f="#8c8c8c" c="#7c7c7c" />,
  greyMove: <L d="M2 7 Q5 2 9 6 M8 3 V7 H5 M12 8 V17 M7 12 H17 M9 10 L15 14 M15 10 L9 14" c="#8c8c8c" w={1.3} />,
  greyHook: <><F d="M2 4 L7 2 L14 6 L16 10 V16 H12 V9 L8 6 L3 8 Z" f="#999" c="#858585" /></>,
  marquee: <><rect x="2" y="3" width="14" height="12" fill="none" stroke="#555" strokeDasharray="3 2" /><Dots pts={[[2, 3], [16, 15]]} c="#444" r={1} /></>,
  cubeRed: <><Cube t={['#9cc8f8', '#68a8f4', '#2458c8']} /><L d="M8 2 V7 M2 5 L10 7" c="#e08070" w={0.9} /></>,

  clock: <><circle cx="9" cy="9" r="7.500" fill="#aabac8" stroke="#5a6670" /><circle cx="9" cy="9" r="5.500" fill="#fff" stroke="#667" /><L d="M9 5 V9 H12" c="#223" w={1.4} /></>,
  views: <><L d="M3 5 L9 2 L15 5 V12 L9 16 L3 12 Z M3 5 L9 8 L15 5 M9 8 V16 M3 12 L9 8 L15 12" c="#229c5c" w={1.3} /><L d="M10 17 L17 13" c="#d83c30" w={1.5} /></>,
  camera: <><F d="M2 5 L13 2 L12 14 L1 16 Z" f="#fbe6ec" c="#d83c58" w={1.2} /><circle cx="9" cy="8" r="3.500" fill="#8cacf0" stroke="#7050b0" /><F d="M11 6 Q16 7 17 11 L15 14 L9 13 Z" f="#8c44a8" /></>,
  tick: <F d="M2 9 L5 8 L8 12 L14 3 L17 3 L9 16 L7 16 Z" f="#2fb34c" c="#1c8434" w={0.6} />,
  folder: <><F d="M2 6 L7 4 L9 6 H15 V15 H3 Z" f="#f4e083" c="#b49a34" /><F d="M3 16 L5 9 H17 L15 16 Z" f="#fcf1a8" c="#b49a34" /></>,
  folderEq: <><F d="M2 6 L7 4 L9 6 H15 V15 H3 Z" f="#f4e083" c="#b49a34" /><F d="M3 16 L5 9 H17 L15 16 Z" f="#fcf1a8" c="#b49a34" /><L d="M12 1 H17 M12 3.500 H17" c="#333" /></>,
  csys: <><F d="M5 7 L10 9 L14 6 L13 13 L7 14 Z" f="#b8ccf4" c="#98a8d0" w={0.6} /><L d="M3 3 L7 12 L15 5 M7 12 L14 15" c="#7c6cac" w={0.9} /><Dots pts={[[3, 3], [15, 5], [7, 12], [15, 15]]} r={1.100} /></>,
  pin: <><circle cx="10" cy="7" r="4.500" fill="#f3df70" stroke="#111" strokeWidth="1.600" /><F d="M4 4 L12 11 L8 14 L3 10 Z" f="#c9a93c" c="#111" w={1.5} /><L d="M5 12 L2 16" c="#111" w={1.5} /></>,
  asmTree: <><rect x="1" y="1" width="5" height="6" fill="#f0e038" stroke="#98902c" /><L d="M3 8 V16 M3 13 H8" c="#667" /><rect x="8" y="7" width="5" height="6" fill="#f0e038" stroke="#98902c" /><L d="M9 15 H17" c="#98902c" w={1.6} /></>,
  partTree: <><rect x="2" y="2" width="5" height="6" rx="2" fill="#f0a8a8" stroke="#b44c54" /><L d="M4 9 V16 M4 12 H9 M8 13 V16 H17" c="#889" /><L d="M10 12 H15" c="#cc8c94" w={1.8} /></>,
  reuse: <><F d="M3 3 H7 V13 Q4 16 2 12 Z" f="#6894e4" c="#3458a8" /><rect x="10" y="3" width="7" height="13" fill="#f5c634" stroke="#b4881c" /><circle cx="13" cy="7" r="1.500" fill="#fff" /><circle cx="13" cy="12" r="1.500" fill="#fff" /></>,
  web: <><F d="M3 2 H12 L16 6 V17 H3 Z" f="#fdf8d0" c="#8c8c6c" /><circle cx="10" cy="11" r="4" fill="#3c80d8" /><F d="M7 9 Q10 7 12 10 L9 13 Z" f="#6cc468" /></>,
  list: <><F d="M1 4 L7 3 V16 L1 15 Z" f="#e4ecf4" c="#70889c" /><rect x="7" y="3" width="10" height="13" fill="#fff" stroke="#60788c" /><Dots pts={[[9.5, 6], [9.5, 13]]} c="#c83434" r={1} /><Dots pts={[[9.5, 9.5]]} c="#27a548" r={1} /><L d="M12 6 H15 M12 9.500 H15 M12 13 H15" c="#333" /></>,
  spectrum: <><rect x="1" y="1" width="7" height="4" fill="#e83020" /><rect x="1" y="5" width="7" height="3" fill="#f8d820" /><rect x="1" y="8" width="7" height="3" fill="#48cc48" /><rect x="1" y="11" width="7" height="3" fill="#28b8e8" /><rect x="1" y="14" width="7" height="3" fill="#2848c8" /><circle cx="11" cy="6" r="3" fill="#f5f0a0" /><L d="M11 8 L15 16" c="#4c4c9c" w={2.4} /></>,
  tools: <><circle cx="11" cy="5" r="4" fill="#f1efa4" /><L d="M4 3 V14" c="#2f3c94" w={3} /><L d="M4 9 H14 M8 9 L16 16 M15 6 L8 9" c="#3c449c" w={2} /><circle cx="4" cy="16" r="1.500" fill="#d8d060" /></>,
  roles: <><circle cx="13" cy="4" r="3.500" fill="#c89048" /><F d="M9 13 Q9 7 13 7 Q17 7 17 13 Z" f="#3c9440" /><circle cx="6" cy="8" r="3.500" fill="#d89c5c" stroke="#5c3c1c" /><F d="M1 17 Q1 11 6 11 Q10 11 10 17 Z" f="#8c58c8" /></>,
  image: <><rect x="1" y="2" width="16" height="14" fill="#2c64c0" stroke="#28344c" strokeWidth="1.500" /><F d="M2 11 Q6 7 9 10 Q13 8 16 11 V15 H2 Z" f="#e4f0fa" /><circle cx="14" cy="5" r="2" fill="#d8e44c" /></>,
  panels: <><rect x="1" y="1" width="16" height="15" fill="#fff" stroke="#a4b4cc" /><rect x="3" y="4" width="4" height="3" fill="#5c6cb8" /><rect x="12" y="4" width="4" height="3" fill="#5c6cb8" /><L d="M8 5.500 H11" c="#8c9cd0" /><rect x="3" y="10" width="3" height="3" fill="#b4c0e0" /><rect x="11" y="10" width="5" height="3" fill="#5c6c9c" /></>,
};

function Icon({ name, size = 18 }: { name: string; size?: number }) {
  if (name === 'textA') {
    return <span className="font-['Liberation_Serif',serif] text-lg font-bold leading-none text-black">A</span>;
  }
  return (
    <svg width={size} height={size} viewBox="0 0 18 18" className="shrink-0" aria-hidden="true">
      {icons[name]}
    </svg>
  );
}

function Caret() {
  return (
    <svg width="6" height="4" viewBox="0 0 6 4" aria-hidden="true">
      <path d="M0 0 H6 L3 3.500 Z" fill="#111" />
    </svg>
  );
}

// Toolbars are listed as space separated names:
// "|" separator, "v" drop-down arrow, "V" toolbar options arrow
const toolbars: string[][] = [
  [
    'start new open save | cut copy paste | undo redo | info | find V',
    'fit blank zoombox zoom rotate pan persp | cube v cubeEdge cube wire wire2 half face v white v more',
    'wcs wcsDyn axes axRot axOri axRgb axXc axYc axSave key layMove layers layCur layIn layOut | measure angle V',
    'wrenchPart bolt',
  ],
  [
    'sketch | extrude revolve sweep sweep2 tube | hole boss dart pocket groove rib | flange link offset pad bend bendRed | cube cyl cone sphere V',
    'line arc circles circleTan spline points fitSpline textA plus pointset corner rect polygon | ellipse helix xyz outline points v project isect isect wrap v doc sheetWin sheetRot mirror cylArrow sail',
  ],
  [
    'bool v plane v | datum datumSph | boxTop curveUp curveUp chamfer shell thread blocks blocks2 book goldBox steps redBox cols goldWire flat cubeHole torus | duo slabs | cubeDots treeGold V',
    'surfDot surfDot2 | sail sailGrid sailGrid surfOr people surfYel surfBlue plane3 | surfPur bookOpen goldTeal flagPair roof stack | swirl mat blueFold boot pipe tower arch hook',
  ],
  [
    'curveWrench docWrench trim cross scurve fillet chamf stretch joinC V',
    'surfWrench surfWrench2 surfRose surfArc surfGreen ribbon2 | x3 ribbon flip V',
    'people goldPlank | table quad mesh | shelf meshBox pinned goldBar | wave drape patchR spool twoSurf rainbow surfRed | blueHex V',
    'greenWave V',
  ],
];

const assemblyBar =
  'findGold gold2 frameGold ghost saveTeal greyPart | addGold addGold goldStem goldFlat goldMove mates constr cnsSave mirrorOr goldPale wrenchGold wrenchG2 | three chain | ghostGold winGold rings nut infoLink infoTree | boxCheck V';

function ToolItem({ name }: { name: string }) {
  if (name === '|') return <span className="mx-[2px] h-5 w-[2px] shrink-0 border-l border-[#aaa] bg-white" />;
  if (name === 'v') {
    return (
      <button aria-label="Options" className="flex h-6 w-3 shrink-0 items-center justify-center">
        <Caret />
      </button>
    );
  }
  if (name === 'V') {
    return (
      <button aria-label="Toolbar options" className="flex h-6 w-3 shrink-0 items-end justify-center pb-1">
        <Caret />
      </button>
    );
  }
  if (name === 'start') {
    return (
      <button className="flex h-6 shrink-0 items-center pl-0.5 text-[11px] text-black">
        <Icon name="nx" />
        <span className="ml-1 w-6 whitespace-nowrap">开始</span>
        <span className="flex w-2 justify-end"><Caret /></span>
      </button>
    );
  }
  const active = name === 'wcs';
  return (
    <button
      aria-label={name}
      className={`flex w-[23px] shrink-0 items-center justify-center ${active ? 'h-[22px] rounded-sm border border-[#555] bg-white' : 'h-6'}`}
    >
      <Icon name={name} />
    </button>
  );
}

function ToolGroup({ items, open = false }: { items: string; open?: boolean }) {
  return (
    <div className={`flex h-full shrink-0 items-center ${open ? '' : 'border-r border-[#b5b5b5] pr-[3px]'}`}>
      <span className="h-4 w-1.5 shrink-0 pl-[2px]">
        <span className="block h-full border-l-2 border-dotted border-[#aaa]" />
      </span>
      {items.split(' ').map((name, i) => <ToolItem key={i} name={name} />)}
    </div>
  );
}

const menus = [
  ['文件', 'F'], ['编辑', 'E'], ['视图', 'V'], ['插入', 'S'], ['格式', 'R'], ['工具', 'T'],
  ['装配', 'A'], ['信息', 'I'], ['分析', 'L'], ['首选项', 'P'], ['窗口', 'O'], ['帮助', 'H'],
];

const MONO = "font-['Liberation_Mono',monospace] text-[10px]";

type TreeRow = {
  label: string;
  suffix?: string;
  icon: string;
  depth: number;
  toggle?: string;
  ticked?: boolean;
  selected?: boolean;
  last?: boolean;
};

const treeRows: TreeRow[] = [
  { label: '', suffix: 'History Mode', icon: 'clock', depth: 0 },
  { label: '模型视图', icon: 'views', depth: 0, toggle: '+' },
  { label: '摄像机', icon: 'camera', depth: 0, toggle: '+', ticked: true },
  { label: '用户表达式', icon: 'folderEq', depth: 0, toggle: '+' },
  { label: '模型历史记录', icon: 'folder', depth: 0, toggle: '-', last: true },
  { label: '基准坐标系', suffix: ' (0)', icon: 'csys', depth: 1 },
  { label: '拉伸', suffix: ' (1)', icon: 'extrude', depth: 1 },
  { label: '拉伸', suffix: ' (2)', icon: 'extrude', depth: 1, selected: true, last: true },
];

// Dotted vertical guide with the expander in its middle
function TreeGuide({ row, first }: { row: TreeRow; first: boolean }) {
  return (
    <span className={`flex h-full shrink-0 flex-col items-center ${row.depth ? 'w-px' : 'w-[9px]'}`}>
      <span className={`w-px flex-1 ${first ? '' : 'border-l border-dotted border-[#999]'}`} />
      {row.toggle && (
        <button aria-label={`Toggle ${row.label}`} className="flex size-[9px] shrink-0 items-center justify-center rounded-xs border border-[#777] bg-white">
          <svg width="5" height="5" viewBox="0 0 5 5" aria-hidden="true">
            <path d={row.toggle === '+' ? 'M0 2.500 H5 M2.500 0 V5' : 'M0 2.500 H5'} stroke="#222" />
          </svg>
        </button>
      )}
      <span className={`w-px flex-1 ${row.last ? '' : 'border-l border-dotted border-[#999]'}`} />
    </span>
  );
}

function TreeCell({ row, first }: { row: TreeRow; first: boolean }) {
  return (
    <div className={`flex h-[19px] items-center ${row.depth ? 'pl-[30px]' : 'pl-[5px]'}`}>
      <TreeGuide row={row} first={first} />
      <span className={`shrink-0 border-t border-dotted border-[#999] ${row.depth ? 'w-2.5' : 'w-1.5'}`} />
      {row.depth === 1 && (
        <span className="relative flex shrink-0">
          <input
            type="checkbox"
            defaultChecked
            aria-label={row.label + row.suffix}
            className="peer size-3 appearance-none border border-[#222] bg-white"
          />
          <span className="pointer-events-none absolute inset-0 hidden items-center justify-center peer-checked:flex">
            <Icon name="tick" size={11} />
          </span>
        </span>
      )}
      {row.ticked && <Icon name="tick" size={15} />}
      <span className="flex w-[18px] shrink-0 justify-center"><Icon name={row.icon} size={16} /></span>
      <span className={`flex h-full flex-1 items-center whitespace-pre pl-[2px] ${row.selected ? 'bg-[#9c9cac] text-white' : ''}`}>
        {row.label}
        <span className={MONO}>{row.suffix}</span>
      </span>
    </div>
  );
}

const sideTabs = [
  { icon: 'asmTree' }, { icon: 'partTree', active: true }, { icon: 'reuse' }, { icon: 'web', gap: true }, { icon: 'clock', gap: true },
  { icon: 'list' }, { icon: 'spectrum' }, { icon: 'tools' }, { icon: 'roles' }, { icon: 'image' }, { icon: 'panels' },
];

function SideTabs() {
  return (
    <nav className="flex w-[26px] shrink-0 flex-col items-end gap-[2px] bg-[#adadad] pt-4">
      {sideTabs.map(t => (
        <button
          key={t.icon}
          aria-label={t.icon}
          className={`flex h-8 items-center justify-center rounded-l border border-r-0 border-[#666] ${t.gap ? 'mt-3' : ''} ${t.active ? 'w-6 bg-[#ececec]' : 'w-[22px] bg-linear-to-b from-[#e4e4e4] to-[#c9c9c9]'}`}
        >
          <Icon name={t.icon} size={17} />
        </button>
      ))}
    </nav>
  );
}

function Navigator() {
  const fillers = Array.from({ length: 22 }, (_, i) => i);
  return (
    <aside className="flex w-[232px] shrink-0 flex-col border-r border-[#999] bg-[#ebebeb] pb-1 pl-[6px] pr-2 pt-[6px] text-[11px] text-[#222]">
      <div className="flex items-center">
        <button aria-label="Pin" className="flex w-6 justify-center"><Icon name="pin" size={13} /></button>
        <h2 className="h-[22px] flex-1 border-b border-r border-[#888] bg-linear-to-b from-[#fafafa] to-[#d8d8d8] pl-[6px] text-[11px] font-bold leading-[20px] text-black">
          部件导航器
        </h2>
      </div>

      <div className="mt-1 flex min-h-0 flex-1 flex-col border border-[#555] bg-white">
        <div className="min-h-0 flex-1 overflow-hidden">
          <table className="w-full table-fixed border-collapse">
            <thead>
              <tr className="h-[15px] border-b border-[#999] bg-linear-to-b from-white to-[#cfcfcf]">
                <th className="h-[15px] w-[200px] border-r border-[#999] py-0 pl-[7px] text-left font-normal leading-[14px]">
                  <span className="flex items-center gap-3.5">
                    名称
                    <svg width="10" height="6" viewBox="0 0 10 6" aria-hidden="true"><path d="M5 0 L10 6 H0 Z" fill="#111" /></svg>
                  </span>
                </th>
                <th className="overflow-hidden py-0 pl-[6px] text-left font-normal leading-[14px]">附</th>
              </tr>
            </thead>
            <tbody>
              {treeRows.map((row, i) => (
                <tr key={row.label + row.suffix} className={`border-b border-[#ddd] ${i % 2 ? 'bg-[#f5f5f5]' : 'bg-white'}`}>
                  <td className="border-r border-[#ddd] p-0"><TreeCell row={row} first={i === 0} /></td>
                  <td className={`p-0 ${row.selected ? 'bg-[#9c9cac]' : ''}`} />
                </tr>
              ))}
              {fillers.map(i => (
                <tr key={i} className={`h-5 border-b border-[#ddd] ${i % 2 ? 'bg-[#f5f5f5]' : 'bg-white'}`}>
                  <td className="border-r border-[#ddd] p-0" />
                  <td className="p-0" />
                </tr>
              ))}
            </tbody>
          </table>
        </div>
        <div className="flex h-[17px] shrink-0 bg-[#fdfdf5]">
          <button aria-label="Scroll left" className="flex w-[18px] items-center justify-center border border-[#8c9ccc] bg-[#dbe4f8]">
            <svg width="7" height="9" viewBox="0 0 7 9" aria-hidden="true"><path d="M6 1 L2 4.500 L6 8" fill="none" stroke="#1d3f8c" strokeWidth="2" /></svg>
          </button>
          <div className="flex w-[127px] items-center justify-center gap-px border border-[#8094c8] bg-linear-to-b from-[#d4dcf4] to-[#b9c6e8]">
            {[0, 1, 2, 3].map(i => <span key={i} className="h-1.5 w-px bg-[#6878a8]" />)}
          </div>
          <div className="flex-1" />
          <button aria-label="Scroll right" className="flex w-[17px] items-center justify-center border border-[#8c9ccc] bg-[#dbe4f8]">
            <svg width="7" height="9" viewBox="0 0 7 9" aria-hidden="true"><path d="M1 1 L5 4.500 L1 8" fill="none" stroke="#1d3f8c" strokeWidth="2" /></svg>
          </button>
        </div>
      </div>

      <div className="flex h-3 shrink-0 items-center gap-1">
        <span className="h-px flex-1 bg-[#aaa]" />
        <span className="h-[5px] w-[38px] border-b border-r border-[#888] bg-[#ccc]" />
        <span className="h-px flex-1 bg-[#aaa]" />
      </div>

      {['相关性', '细节', '预览'].map(title => (
        <button key={title} className="flex h-[22px] shrink-0 items-center border-b border-r border-[#888] bg-linear-to-b from-[#fafafa] to-[#d4d4d4] text-[11px] font-bold text-black">
          <span className="flex-1 pl-[7px] text-left">{title}</span>
          <span className="flex h-full w-[22px] items-center justify-center border-l border-[#999]">
            <svg width="12" height="10" viewBox="0 0 12 10" aria-hidden="true"><path d="M1.500 1 L6 8 L10.500 1" fill="none" stroke="#555" strokeWidth="2.500" /></svg>
          </span>
        </button>
      ))}
    </aside>
  );
}

function Viewport() {
  return (
    <main className="relative min-w-0 flex-1 border-l-3 border-[#777] bg-linear-to-b from-[#b9babc] via-[#d3d4d5] to-[#e9eaea]">
      <svg viewBox="0 0 956 748" preserveAspectRatio="xMinYMin meet" className="absolute inset-0 size-full font-['Liberation_Sans',sans-serif]" aria-hidden="true">
        <circle cx="390" cy="361" r="301.500" fill="#a1b4ba" />
        <circle cx="390" cy="361" r="301.500" fill="none" stroke="#4c585c" strokeWidth="0.500" strokeDasharray="1 9 2 31" />
        <circle cx="390" cy="361" r="15" fill="#dedfe0" />
        <path d="M378 370 A15 15 0 0 0 401 371" fill="none" stroke="#d9a871" />
        <g stroke="#dadcdd" strokeWidth="1.500" fill="none">
          <path d="M390 350 L387 274 M386 240 L379 274 H393 Z" />
          <path d="M405 361 L476 358 M511 356 L476 350 V364 Z" />
        </g>
        <circle cx="390" cy="361" r="6.500" fill="none" stroke="#7a7868" strokeWidth="1.500" />
        <path d="M390 346 V361 M386 361 H405 M392 355 L396 361 L390 364" fill="none" stroke="#a07d46" strokeWidth="1.300" />
        <g fill="#ccd2d4" fontSize="10">
          <text x="385" y="234">Y</text>
          <text x="517" y="356">X</text>
          <text x="389" y="313">YC</text>
          <text x="439" y="360">XC</text>
        </g>
        <path d="M66 647 L67 681" stroke="#2ab58c" strokeWidth="2" />
        <path d="M69 681 L102 680" stroke="#d23c40" strokeWidth="2" />
        <rect x="64" y="679" width="5" height="5" fill="#8890d8" stroke="#3238a0" />
        <text x="62" y="642" fontSize="9" fill="#2ab58c">Y</text>
        <text x="109" y="683" fontSize="9" fill="#d23c40">X</text>
      </svg>
      <div className="absolute left-0 top-px h-[60px] w-[295px] bg-white text-[20px] font-light text-black">
        <p className="flex h-[19px] items-center whitespace-pre leading-[19px]">
          <span className="font-['Liberation_Mono',monospace] text-[17px]">02 </span>
          <span>对拉伸除料做</span>
          <span className="font-['Liberation_Mono',monospace] text-[17px]"> </span>
          <span>实例特征——</span>
        </p>
        <p className="flex h-[19px] items-center whitespace-pre leading-[19px]">矩形阵列，参数如图</p>
      </div>
    </main>
  );
}

const fields = [
  { label: 'XC 向的数量', value: '5', unit: '' },
  { label: 'XC 偏置', value: '20', unit: 'mm' },
  { label: 'YC 向的数量', value: '1', unit: '' },
  { label: 'YC 偏置', value: '0', unit: 'mm' },
];

// Floating window that runs past the right edge of the screen
function ParameterDialog() {
  const [method, setMethod] = useState('常规');
  return (
    <section className="absolute right-0 top-[154px] z-10 w-[221px] overflow-hidden font-['DejaVu_Sans','Noto_Sans_CJK_SC',sans-serif] text-xs text-black">
      <div className="w-[290px]">
        <header className="ml-[143px] flex h-5 items-stretch border-t border-[#666] bg-linear-to-b from-[#555] to-[#111] text-white">
          <button aria-label="Previous" className="flex w-[18px] items-center justify-center border border-[#777] bg-[#e3e3e3]">
            <svg width="9" height="10" viewBox="0 0 9 10" aria-hidden="true"><path d="M8 1 L2 5 L8 9" fill="none" stroke="#555" strokeWidth="2" /></svg>
          </button>
          <button aria-label="Collapse" className="flex w-[19px] items-center justify-center border-r border-[#888]">
            <svg width="10" height="10" viewBox="0 0 10 10" aria-hidden="true"><path d="M1 1 L7 7" stroke="#fff" strokeWidth="2" /><path d="M9 3 V9 H3 Z" fill="#fff" /></svg>
          </button>
          <h2 className="whitespace-nowrap pl-[3px] text-xs font-bold leading-[17px]">输入参数</h2>
        </header>

        <form className="border-l border-[#888] bg-[#ebebeb] pt-[11px]" onSubmit={e => e.preventDefault()}>
          <fieldset className="ml-[9px] h-20 w-16 border-2 border-[#aaa] bg-[#d2d2d2] pl-[3px]">
            <legend className="float-left w-full pl-[4px] text-xs font-bold leading-[18px]">方法</legend>
            {['常规', '简单', '相同'].map(m => (
              <label key={m} className="flex h-[19px] w-full items-center gap-[2px] whitespace-nowrap">
                <input
                  type="radio"
                  name="method"
                  checked={method === m}
                  onChange={() => setMethod(m)}
                  className="size-4 shrink-0 appearance-none rounded-full border border-[#777] bg-linear-to-b from-[#f2f2f2] to-[#cfcfcf] checked:border-[#1c5c94] checked:bg-[radial-gradient(circle,#123c6c_0_3px,#7cc8f4_4px,#c4ecff_7px)]"
                />
                {m}
              </label>
            ))}
          </fieldset>

          <div className="ml-2 mt-[3px] flex flex-col gap-1 border-t border-[#aaa] pt-1">
            {fields.map(f => (
              <label key={f.label} className="flex h-5 items-center">
                <span className="w-36 text-[11px]">{f.label}</span>
                <span className="flex h-5 w-32 items-center overflow-hidden rounded border-2 border-[#777] bg-[#e0e0e0]">
                  <input defaultValue={f.value} className="h-4 w-[61px] bg-white pl-[2px] text-[11px] outline-none" />
                  <span className="pl-[2px] text-[11px]">{f.unit}</span>
                </span>
              </label>
            ))}
          </div>

          <div className="ml-[6px] mt-2 flex h-[36px] gap-[6px] border-t border-[#aaa] pl-[87px] pt-[5px]">
            <button type="submit" className="h-5 w-[53px] shrink-0 rounded border-2 border-[#3f6484] bg-linear-to-b from-[#b9e4fb] via-[#6cc0f0] to-[#a4e4ff] leading-none">确定</button>
            <button type="button" className="h-5 w-[53px] shrink-0 rounded border-2 border-[#777] bg-linear-to-b from-[#fafafa] via-[#dadada] to-[#ededed] leading-none">后退</button>
            <button type="button" className="h-5 w-[53px] shrink-0 rounded border-2 border-[#777] bg-linear-to-b from-[#fafafa] via-[#dadada] to-[#ededed] leading-none">取消</button>
          </div>
        </form>
        <div className="h-2 rounded-bl bg-[#1a1a1a]" />
      </div>
    </section>
  );
}

function FilterSelect({ label, value, width }: { label: string; value: string; width: string }) {
  return (
    <span className={`flex h-[17px] shrink-0 items-center rounded-sm border border-[#999] bg-[#dcdcdc] ${width}`}>
      <select disabled aria-label={label} className="h-full min-w-0 flex-1 appearance-none bg-transparent pl-[2px] text-[11px] leading-none text-[#a2a2a2] opacity-100">
        <option>{value}</option>
      </select>
      <span className="flex h-full w-[17px] shrink-0 items-center justify-center border-l border-[#aaa] bg-[#eee]">
        <svg width="10" height="6" viewBox="0 0 10 6" aria-hidden="true"><path d="M0 0 H10 L5 6 Z" fill="#888" /></svg>
      </span>
    </span>
  );
}

export default function App() {
  return (
    <div lang="zh-CN" className="relative flex h-screen w-full flex-col overflow-hidden bg-[#c4c4c4] font-['Noto_Sans_CJK_SC',sans-serif] text-[#222]">
      <header className="flex h-[27px] shrink-0 items-center justify-between overflow-hidden border-y border-black bg-[linear-gradient(#77777b,#444_8px,#1c1c1c_9px)] text-white">
        <h1 className="flex items-center gap-1 font-['Noto_Sans',sans-serif] text-[13px] font-bold leading-none">
          <Icon name="nx" size={17} />
          NX 6 - Modeling - [zhenlie-1.prt]
        </h1>
        <div className="flex items-center gap-7">
          <span className="font-['Noto_Sans',sans-serif] text-sm font-extrabold leading-none">SIEMENS</span>
          <button aria-label="Minimize" className="-mr-1 flex h-5 w-4 items-center justify-center rounded-sm border border-[#777] bg-linear-to-b from-[#777] to-[#222]">
            <span className="h-[3px] w-2 bg-white" />
          </button>
        </div>
      </header>

      <nav className="flex h-[23px] shrink-0 items-center bg-[#e6e6e6] pl-[5px]">
        <Icon name="part" />
        <div className="flex gap-[13px] pl-[5px]">
          {menus.map(([label, key]) => (
            <button key={key} className="whitespace-nowrap text-[11px] leading-none text-black">
              {label}
              <span className={MONO}>(<u>{key}</u>)</span>
            </button>
          ))}
        </div>
      </nav>

      {toolbars.map((groups, i) => (
        <div key={i} className="flex h-[26px] shrink-0 overflow-hidden border-t border-[#bbb] bg-linear-to-b from-[#e2e2e2] to-[#d2d2d2]">
          {groups.map((g, j) => <ToolGroup key={g} items={g} open={i < 3 && j === groups.length - 1} />)}
        </div>
      ))}

      <div className="h-[15px] shrink-0 border-b border-[#777] bg-[#bebebe] pt-1">
        <div className="h-2 border-y border-[#888] bg-linear-to-b from-[#aaa] to-[#eee]" />
      </div>

      <div className="flex min-h-0 flex-1">
        <SideTabs />
        <Navigator />
        <Viewport />
      </div>

      <div className="flex h-[28px] shrink-0 overflow-hidden border-t border-[#999] bg-linear-to-b from-[#f2f2f2] to-[#c8c8c8]">
        <ToolGroup items={assemblyBar} />
      </div>
      <div className="flex h-[27px] shrink-0 items-center overflow-hidden border-t border-[#888] bg-[#d0d0d0] pl-[3px]">
        <div className="mr-1 flex gap-2">
          <FilterSelect label="类型过滤器" value="没有选择过滤器" width="w-[111px]" />
          <FilterSelect label="选择范围" value="仅在工作部件内部" width="w-[117px]" />
        </div>
        {'greyLink | snap v back greyCube greyMove greyHook | marquee v | cubeRed'.split(' ').map((name, i) => <ToolItem key={i} name={name} />)}
      </div>

      <ParameterDialog />
    </div>
  );
}
